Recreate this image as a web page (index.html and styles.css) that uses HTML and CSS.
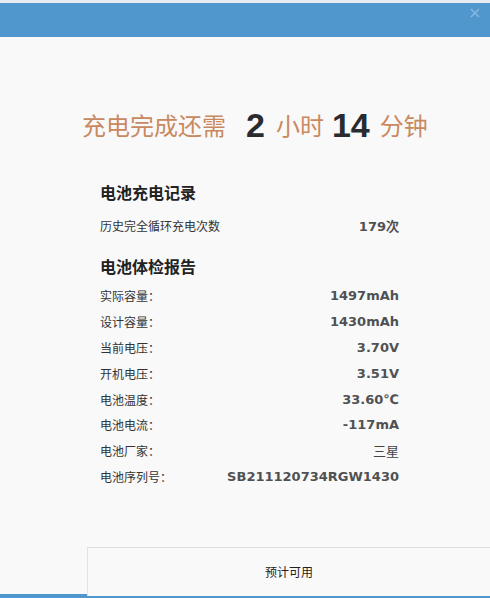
FILE: index.html
```html
<!DOCTYPE html>
<html lang="zh-CN">
<head>
<meta charset="utf-8">
<title>电池</title>
<link rel="stylesheet" href="styles.css">
</head>
<body>
<div class="app">
  <header class="topbar">
    <span class="close">
      <svg width="10" height="10" viewBox="0 0 10 10"><path d="M1 1L9 9M9 1L1 9" stroke="#86b6de" stroke-width="1.6"/></svg>
    </span>
  </header>
  <div class="title">
    <span class="t-label">充电完成还需</span>
    <span class="t-num n1">2</span>
    <span class="t-unit">小时</span>
    <span class="t-num n2">14</span>
    <span class="t-unit">分钟</span>
  </div>
  <main class="content">
    <h2 class="heading h-first">电池充电记录</h2>
    <div class="row row-single"><span class="label">历史完全循环充电次数</span><span class="value">179次</span></div>
    <h2 class="heading h-second">电池体检报告</h2>
    <div class="rows">
      <div class="row"><span class="label">实际容量：</span><span class="value">1497mAh</span></div>
      <div class="row"><span class="label">设计容量：</span><span class="value">1430mAh</span></div>
      <div class="row"><span class="label">当前电压：</span><span class="value">3.70V</span></div>
      <div class="row"><span class="label">开机电压：</span><span class="value">3.51V</span></div>
      <div class="row"><span class="label">电池温度：</span><span class="value">33.60℃</span></div>
      <div class="row"><span class="label">电池电流：</span><span class="value">-117mA</span></div>
      <div class="row"><span class="label">电池厂家：</span><span class="value cn">三星</span></div>
      <div class="row"><span class="label">电池序列号：</span><span class="value">SB211120734RGW1430</span></div>
    </div>
  </main>
  <footer class="footer">
    <div class="estimate">预计可用</div>
  </footer>
</div>
</body>
</html>
```
FILE: styles.css
```css
html, body {
  margin: 0;
  padding: 0;
}
body {
  background: #f9f9fa;
  font-family: "Noto Sans CJK SC", "DejaVu Sans", sans-serif;
}
.app {
  width: 490px;
  height: 598px;
  display: flex;
  flex-direction: column;
  background: #f9f9fa;
  overflow: hidden;
}
.topbar {
  height: 34px;
  border-top: 3px solid #e6ebf0;
  background: #4f97cc;
  display: flex;
  justify-content: flex-end;
  align-items: flex-start;
  flex-shrink: 0;
}
.close {
  display: block;
  width: 10px;
  height: 10px;
  margin: 5px 10px 0 0;
}
.close svg { display: block; }
.title {
  margin-top: 68px;
  height: 40px;
  display: flex;
  align-items: center;
  padding-left: 82px;
}
.t-label, .t-unit {
  font-size: 24px;
  color: #c9895f;
  line-height: 40px;
}
.t-num {
  font-family: "Liberation Sans", Arial, sans-serif;
  font-weight: bold;
  font-size: 34px;
  color: #2a2b2f;
  line-height: 40px;
}
.n1 { margin: 0 11px 0 20px; }
.n2 { margin: 0 10px 0 8px; }
.content {
  padding: 0 91px 0 100px;
}
.heading {
  margin: 0;
  font-size: 16px;
  font-weight: bold;
  color: #222;
  line-height: 24px;
  height: 24px;
}
.h-first { margin-top: 35px; }
.h-second { margin-top: 16px; }
.row {
  display: flex;
  justify-content: space-between;
  align-items: center;
  height: 25.8px;
}
.row-single {
  margin-top: 8px;
  height: 26px;
}
.rows { margin-top: 5px; }
.label {
  font-size: 12px;
  color: #333;
}
.value {
  font-family: "DejaVu Sans", sans-serif;
  font-weight: bold;
  font-size: 13px;
  color: #505152;
}
.value.cn {
  font-family: "Noto Sans CJK SC", sans-serif;
  font-weight: normal;
  font-size: 13px;
  color: #444;
}
.footer {
  margin-top: auto;
  padding: 0 0 2px 87px;
  background: linear-gradient(to top, #4f97cc 4px, transparent 4px);
}
.estimate {
  height: 46px;
  padding-bottom: 2px;
  border-top: 1px solid #dedfe0;
  border-left: 1px solid #e2e3e4;
  background: #f9f9fa;
  display: flex;
  align-items: center;
  justify-content: center;
  font-size: 12px;
  color: #222;
}
```
